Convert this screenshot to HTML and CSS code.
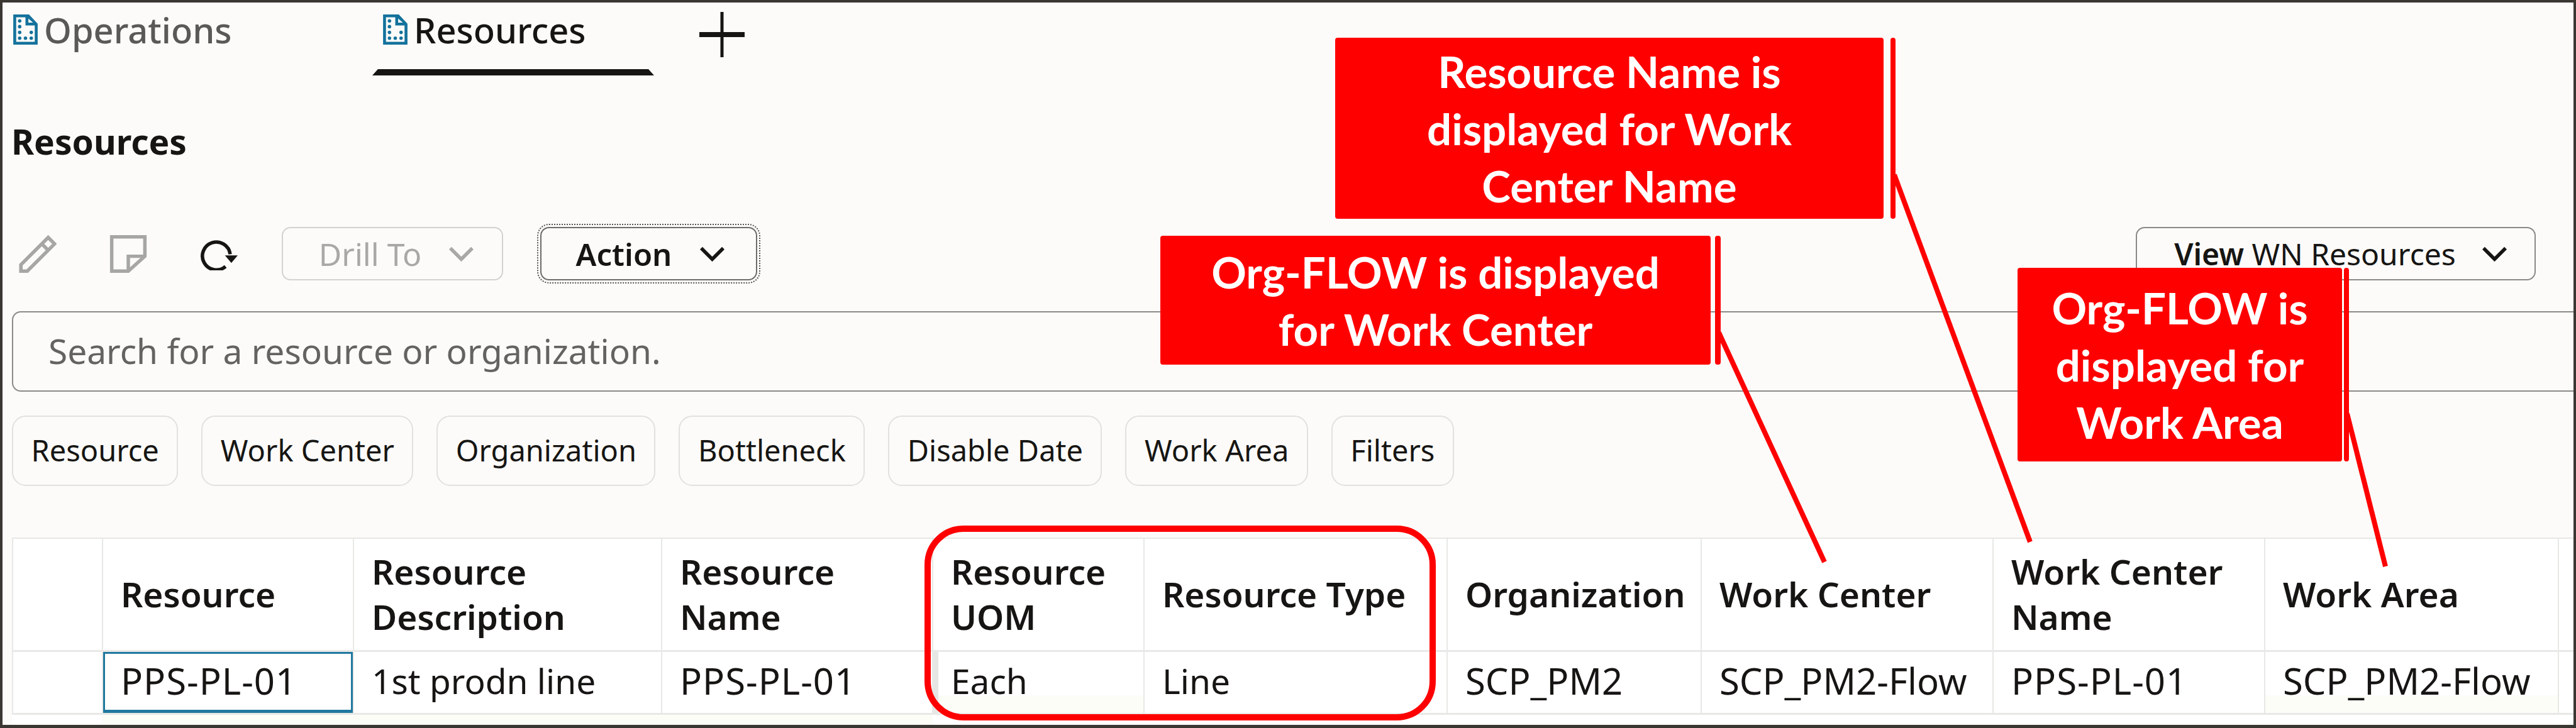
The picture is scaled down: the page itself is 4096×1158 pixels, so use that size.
FILE: index.html
```html
<!DOCTYPE html>
<html lang="en">
<head>
    <meta charset="UTF-8">
    <meta name="viewport" content="width=device-width, initial-scale=1.0">
    <title>Resources</title>
    <link rel="stylesheet" href="styles.css">
</head>
<body>
    <div class="frame">
        <div class="tabs">
            <div class="tab">
                <div class="tab-label">
                    <svg class="doc-icon" viewBox="0 0 42 52"><path fill="#14729c" d="M0 0H27L42 16V52H0Z"/><path fill="#fcfbf9" d="M5 5H21V19H37V47H5Z"/><path fill="#fcfbf9" d="M26 7L34 14H26Z"/><g fill="#14729c"><circle cx="11" cy="11" r="3"/><circle cx="11" cy="21" r="3"/><circle cx="11" cy="31" r="3"/><circle cx="11" cy="41" r="3"/><circle cx="21" cy="41" r="3"/><circle cx="31" cy="41" r="3"/><circle cx="31" cy="31" r="3"/></g></svg>
                    <span class="tab-text muted">Operations</span>
                </div>
            </div>
            <div class="tab active">
                <div class="tab-label">
                    <svg class="doc-icon" viewBox="0 0 42 52"><path fill="#14729c" d="M0 0H27L42 16V52H0Z"/><path fill="#fcfbf9" d="M5 5H21V19H37V47H5Z"/><path fill="#fcfbf9" d="M26 7L34 14H26Z"/><g fill="#14729c"><circle cx="11" cy="11" r="3"/><circle cx="11" cy="21" r="3"/><circle cx="11" cy="31" r="3"/><circle cx="11" cy="41" r="3"/><circle cx="21" cy="41" r="3"/><circle cx="31" cy="41" r="3"/><circle cx="31" cy="31" r="3"/></g></svg>
                    <span class="tab-text">Resources</span>
                </div>
                <div class="tab-line"></div>
            </div>
            <svg class="plus" viewBox="0 0 72 72"><path fill="#161513" d="M0 32H72V40H0Z"/><path fill="#161513" d="M33.500 0H38.500V72H33.500Z"/></svg>
        </div>

        <h1 class="title">Resources</h1>

        <div class="toolbar">
            <svg class="tool" viewBox="0 0 64 65"><path fill="none" stroke="#a6a6a4" stroke-width="6" d="M3 62V51L50 4L61 15L14 62Z"/><path fill="none" stroke="#a6a6a4" stroke-width="6" d="M39 15L50 26"/></svg>
            <svg class="tool" viewBox="0 0 64 66"><path fill="none" stroke="#a6a6a4" stroke-width="6" d="M3 3H61V37L32 63H3Z"/><path fill="none" stroke="#a6a6a4" stroke-width="6" d="M32 63V37H61"/></svg>
            <svg class="tool" viewBox="0 0 65 55"><path fill="none" stroke="#161513" stroke-width="6" d="M44 49A24 24 0 1 1 52 28"/><path fill="#161513" d="M43 30H65L54 43Z"/></svg>
            <button class="btn drill">Drill To <svg class="chev" viewBox="0 0 44 26"><path fill="none" stroke="#a9a8a6" stroke-width="6" d="M3 3L22 22L41 3"/></svg></button>
            <button class="btn action">Action <svg class="chev" viewBox="0 0 44 26"><path fill="none" stroke="#161513" stroke-width="6" d="M3 3L22 22L41 3"/></svg></button>
            <button class="btn view"><span><b>View</b> WN Resources</span> <svg class="chev" viewBox="0 0 44 26"><path fill="none" stroke="#161513" stroke-width="6" d="M3 3L22 22L41 3"/></svg></button>
        </div>

        <div class="search">Search for a resource or organization.</div>

        <div class="chips">
            <div class="chip">Resource</div>
            <div class="chip">Work Center</div>
            <div class="chip">Organization</div>
            <div class="chip">Bottleneck</div>
            <div class="chip">Disable Date</div>
            <div class="chip">Work Area</div>
            <div class="chip">Filters</div>
        </div>

        <table class="grid">
            <colgroup>
                <col class="c-check">
                <col class="c-res">
                <col class="c-desc">
                <col class="c-name">
                <col class="c-uom">
                <col class="c-type">
                <col class="c-org">
                <col class="c-wc">
                <col class="c-wcn">
                <col class="c-wa">
                <col class="c-end">
            </colgroup>
            <thead>
                <tr>
                    <th></th>
                    <th>Resource</th>
                    <th>Resource<br>Description</th>
                    <th>Resource<br>Name</th>
                    <th>Resource<br>UOM</th>
                    <th>Resource Type</th>
                    <th>Organization</th>
                    <th>Work Center</th>
                    <th>Work Center<br>Name</th>
                    <th>Work Area</th>
                    <th></th>
                </tr>
            </thead>
            <tbody>
                <tr>
                    <td></td>
                    <td class="code pps selected">PPS-PL-01</td>
                    <td>1st prodn line</td>
                    <td class="code pps">PPS-PL-01</td>
                    <td class="uom pale">Each</td>
                    <td>Line</td>
                    <td class="code">SCP_PM2</td>
                    <td class="code">SCP_PM2-Flow</td>
                    <td class="code pps">PPS-PL-01</td>
                    <td class="code pale">SCP_PM2-Flow</td>
                    <td></td>
                </tr>
                <tr class="tail">
                    <td></td>
                    <td class="tail-pale" colspan="3"></td>
                    <td colspan="7"></td>
                </tr>
            </tbody>
        </table>

        <!-- annotations on top of the screenshot -->
        <div class="ring"></div>
        <div class="note note-name">Resource Name is<br>displayed for Work<br>Center Name</div>
        <div class="note note-center">Org-FLOW is displayed<br>for Work Center</div>
        <div class="note note-area">Org-FLOW is<br>displayed for<br>Work Area</div>
        <svg class="leaders" viewBox="0 0 4096 1158">
            <g fill="#ff0000">
                <rect x="3006" y="60" width="8" height="288" rx="4"/>
                <rect x="2727" y="375" width="9" height="205" rx="4"/>
                <rect x="3727" y="426" width="8" height="308" rx="4"/>
            </g>
            <g stroke="#ff0000" stroke-width="8" fill="none">
                <path d="M3012 278L3228 862"/>
                <path d="M2733 529L2901 894"/>
                <path d="M3732 658L3793 901"/>
            </g>
        </svg>
    </div>
</body>
</html>
```

FILE: styles.css
```css
* {
    margin: 0;
    padding: 0;
    box-sizing: border-box;
}

body {
    width: 4096px;
    height: 1158px;
    overflow: hidden;
    font-family: "Noto Sans", Arial, sans-serif;
    color: #161513;
    background: #fcfbf9;
}

.frame {
    position: relative;
    width: 4096px;
    height: 1158px;
    overflow: hidden;
    border-style: solid;
    border-color: #3a3632;
    border-width: 4px 4px 5px 4px;
}

/* tabs */
.tabs {
    display: flex;
    height: 116px;
}

.tab {
    display: flex;
    flex-direction: column;
    width: 448px;
    height: 116px;
    padding-top: 19px;
}

.tab:first-child {
    width: 588px;
}

.tab-label {
    display: flex;
    gap: 10px;
    height: 87px;
    padding-left: 17px;
}

.doc-icon {
    width: 39px;
    height: 48px;
    flex-shrink: 0;
}

.tab-text {
    font-size: 56px;
    line-height: 48px;
    font-weight: 500;
}

.tab .muted {
    color: #5b5957;
}

.tab-line {
    height: 10px;
    background: #161513;
    clip-path: polygon(2% 0, 98% 0, 100% 100%, 0 100%);
}

.plus {
    width: 72px;
    height: 72px;
    margin: 15px 0 0 72px;
}

.title {
    margin: 73px 0 0 14px;
    font-size: 55px;
    line-height: 64px;
    font-weight: 700;
}

/* toolbar */
.toolbar {
    display: flex;
    align-items: center;
    height: 85px;
    margin-top: 104px;
    padding: 0 60px 0 26px;
}

.tool {
    width: 60px;
    height: 60px;
    margin-right: 84px;
}

.tool:nth-child(3) {
    height: 52px;
    margin-right: 70px;
}

.btn {
    display: flex;
    align-items: center;
    justify-content: center;
    height: 85px;
    background: transparent;
    border: 2px solid #8a8987;
    border-radius: 14px;
    font-family: inherit;
    font-size: 48px;
    color: #161513;
}

.chev {
    width: 41px;
    height: 24px;
}

.drill {
    width: 352px;
    gap: 43px;
    margin-right: 59px;
    padding-left: 13px;
    font-size: 50px;
    color: #a9a8a6;
    border-color: #d3d2d0;
}

.action {
    width: 345px;
    gap: 44px;
    padding-left: 6px;
    font-size: 49px;
    font-weight: 600;
    border-color: #6c6b69;
    outline: 2px dotted #555452;
    outline-offset: 3px;
}

.view {
    width: 636px;
    gap: 41px;
    margin-left: auto;
    padding-left: 16px;
}

.view b {
    font-weight: 600;
}

.search {
    height: 128px;
    margin: 49px -20px 0 15px;
    padding-left: 56px;
    border: 2px solid #8b8a88;
    border-radius: 14px;
    font-size: 55px;
    line-height: 122px;
    color: #656361;
}

.chips {
    display: flex;
    gap: 37px;
    margin: 38px 0 0 15px;
}

.chip {
    height: 112px;
    padding: 0 28.5px;
    border: 2px solid #e2e1df;
    border-radius: 22px;
    font-size: 47px;
    line-height: 106px;
    white-space: nowrap;
}

/* data table */
.grid {
    width: 4073px;
    margin: 82px 0 0 15px;
    table-layout: fixed;
    border-collapse: collapse;
    background: #fff;
}

.c-check { width: 143px; }
.c-res { width: 399px; }
.c-desc { width: 490px; }
.c-name { width: 431px; }
.c-uom { width: 336px; }
.c-type { width: 482px; }
.c-org { width: 404px; }
.c-wc { width: 464px; }
.c-wcn { width: 432px; }
.c-wa { width: 467px; }
.c-end { width: 25px; }

.grid th,
.grid td {
    padding: 0 0 0 28px;
    border: 2px solid #e8e8e6;
    border-bottom-width: 3px;
    text-align: left;
    white-space: nowrap;
    overflow: hidden;
}

.grid th {
    height: 179px;
    font-size: 55px;
    line-height: 72px;
    font-weight: 600;
}

.grid td {
    height: 100px;
    font-size: 55px;
    line-height: 72px;
    padding-bottom: 5px;
}

/* ids and codes run wider than the prose cells */
.grid .code {
    font-size: 58px;
}

.grid .pps {
    letter-spacing: 1px;
}

.grid .selected {
    box-shadow: inset 0 0 0 3px #1f789f, inset 0 -5px 0 #1f789f;
}

.grid .pale {
    background: linear-gradient(transparent 72%, #fbfdf6 72%);
}

.grid .uom {
    box-shadow: inset 8px 0 0 #e6e6e4;
}

.grid .tail td {
    height: 19px;
    padding: 0;
    border-width: 0;
    font-size: 0;
    line-height: 0;
}

.grid .tail-pale {
    background: #fbfdf6;
    border-left: 2px solid #e8e8e6;
}

/* annotations */
.ring {
    position: absolute;
    left: 1466px;
    top: 832px;
    width: 813px;
    height: 310px;
    border: 10px solid #ff0000;
    border-radius: 62px;
}

.note {
    position: absolute;
    display: flex;
    align-items: center;
    justify-content: center;
    text-align: center;
    background: #ff0000;
    border-radius: 4px;
    color: #fff;
    font-family: Lato, "Noto Sans", sans-serif;
    font-size: 69px;
    font-weight: 700;
    line-height: 91px;
}

.note-name {
    left: 2119px;
    top: 56px;
    width: 872px;
    height: 288px;
}

.note-center {
    left: 1841px;
    top: 371px;
    width: 875px;
    height: 205px;
}

.note-area {
    left: 3204px;
    top: 422px;
    width: 516px;
    height: 308px;
}

.leaders {
    position: absolute;
    left: -4px;
    top: -4px;
    width: 4096px;
    height: 1158px;
    pointer-events: none;
}
```
